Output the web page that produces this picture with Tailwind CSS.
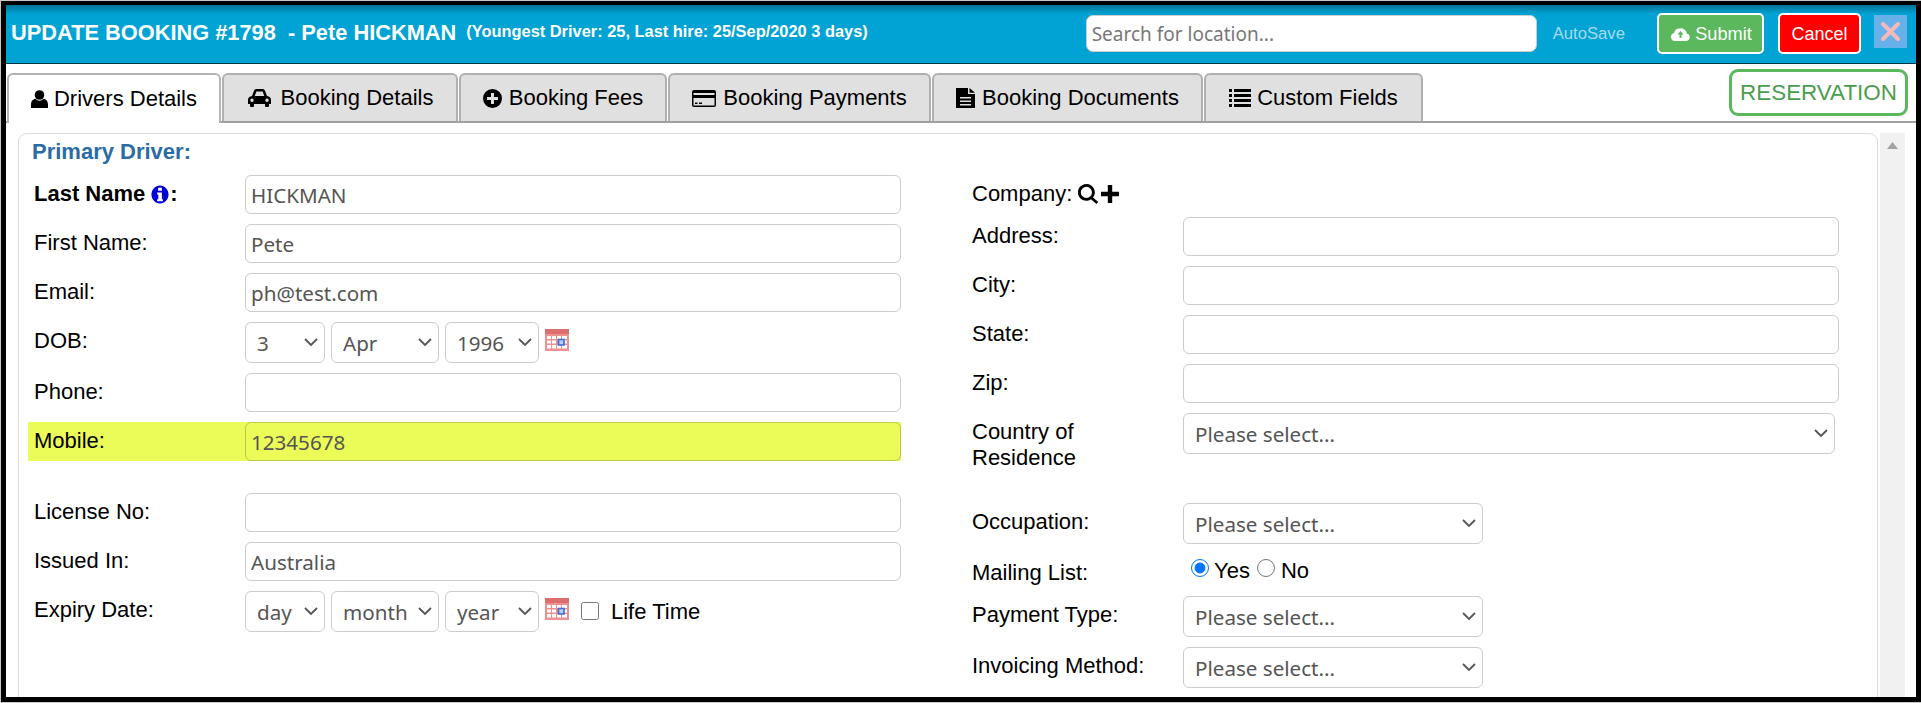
<!DOCTYPE html>
<html lang="en">
<head>
    <meta charset="UTF-8">
    <title>Update Booking</title>
    <script src="https://cdn.jsdelivr.net/npm/@tailwindcss/browser@4"></script>
</head>
<body class="bg-[#c8c8c8]">
    <div class="w-[1921px] h-[703px] overflow-hidden pt-px pl-px font-['Liberation_Sans',Arial,sans-serif] text-[22px] leading-[26px] text-black">
        <div class="w-[1920px] h-[701px] border-t-4 border-l-[5px] border-r-[5px] border-b-[5px] border-black bg-white flex flex-col">

            <!-- header bar -->
            <div class="h-[59px] shrink-0 flex border-b border-[#06384a] bg-[linear-gradient(#00749a,#00a3d3_9px)] text-white">
                <div class="ml-[5px] mt-[15px] text-[21.8px] font-bold whitespace-pre">UPDATE BOOKING #1798  - Pete HICKMAN</div>
                <div class="ml-[10px] mt-[13px] text-[16.4px] font-bold">(Youngest Driver: 25, Last hire: 25/Sep/2020 3 days)</div>
                <input type="text" placeholder="Search for location..." class="ml-auto mt-[10px] w-[451px] h-[37px] rounded-[7px] border border-[#ccc] bg-white px-[5px] font-['Noto_Sans',sans-serif] text-[19px] text-[#555] placeholder:text-[#777]">
                <div class="ml-[16px] mt-[16px] text-[16.7px] leading-[26px] text-[#a4dcf0]">AutoSave</div>
                <button class="ml-[32px] mt-[8px] w-[107px] h-[41px] pl-[2px] rounded-[5px] border-2 border-white bg-[#5cb85c] flex items-center justify-center gap-[5px] text-[18.2px]">
                    <svg width="19" height="14" viewBox="0 0 19 14"><path fill="#fff" d="M4 14a4 4 0 0 1-.8-7.900A5.200 5.200 0 0 1 8.500 1.500a5 5 0 0 1 4.700 1A4.500 4.500 0 0 1 15.700 6.500a3.800 3.800 0 0 1-.7 7.500z"/><path fill="#5cb85c" d="M9.500 4l3 3.500h-2V11h-2V7.500h-2z"/></svg>
                    Submit
                </button>
                <button class="ml-[14px] mt-[8px] w-[83px] h-[41px] rounded-[5px] border-2 border-white bg-[#ff0000] text-[18px]">Cancel</button>
                <div class="ml-[13px] mr-[9px] mt-[10px] w-[33px] h-[33px] bg-[#67b1eb] flex items-center justify-center">
                    <svg width="21" height="21" viewBox="0 0 21 21"><path d="M3 3l15 15M18 3L3 18" stroke="#f3b9bb" stroke-width="4" stroke-linecap="round"/></svg>
                </div>
            </div>

            <!-- tabs -->
            <div class="h-[59px] shrink-0 flex items-end gap-px pl-px border-b-2 border-[#a0a0a0]">
                <a class="relative -mb-[2px] w-[214px] h-[50px] flex items-center justify-center gap-[6px] rounded-t-[6px] border-2 border-b-0 border-[#b4b4b4] bg-white">
                    <svg width="17" height="18" viewBox="0 0 17 18"><circle cx="8.500" cy="5" r="4.800"/><path d="M0 18v-3.500C0 11 2.500 8.800 4.500 8.800c1 1.200 2.500 1.900 4 1.900s3-.7 4-1.900c2 0 4.500 2.200 4.500 5.700V18z"/></svg>
                    Drivers Details
                </a>
                <a class="w-[236px] h-[48px] flex items-center justify-center gap-[9px] rounded-t-[6px] border-2 border-b-0 border-[#b0b0b0] bg-[#e0e0e0]">
                    <svg width="25" height="18" viewBox="0 0 25 18"><path fill-rule="evenodd" d="M5 7l2-5.300Q7.600 0 9.200 0h6.600q1.600 0 2.200 1.700L20 7q4 .6 4 4v4h-2v2q0 1-1 1h-2q-1 0-1-1v-2H7v2q0 1-1 1H4q-1 0-1-1v-2H1v-4q0-3.400 4-4zm2.700 0h9.600L15.600 2.500H9.400zM5 9.500a1.700 1.700 0 1 0 0 3.400 1.700 1.700 0 0 0 0-3.400zm15 0a1.700 1.700 0 1 0 0 3.400 1.700 1.700 0 0 0 0-3.400z"/></svg>
                    Booking Details
                </a>
                <a class="w-[208px] h-[48px] flex items-center justify-center gap-[7px] rounded-t-[6px] border-2 border-b-0 border-[#b0b0b0] bg-[#e0e0e0]">
                    <svg width="19" height="19" viewBox="0 0 19 19"><path fill-rule="evenodd" d="M9.500 0a9.500 9.500 0 1 1 0 19 9.500 9.500 0 0 1 0-19zM8 4v4H4v3h4v4h3v-4h4V8h-4V4z"/></svg>
                    Booking Fees
                </a>
                <a class="w-[263px] h-[48px] flex items-center justify-center gap-[7px] rounded-t-[6px] border-2 border-b-0 border-[#b0b0b0] bg-[#e0e0e0]">
                    <svg width="24" height="17" viewBox="0 0 24 17"><path fill-rule="evenodd" d="M2 0h20q2 0 2 2v13q0 2-2 2H2q-2 0-2-2V2q0-2 2-2zm-.500 3v2h21V3zm0 5v7.500h21V8zM3 12.500h2.500V14H3zm4 0h3V14H7z"/></svg>
                    Booking Payments
                </a>
                <a class="w-[271px] h-[48px] flex items-center justify-center gap-[7px] rounded-t-[6px] border-2 border-b-0 border-[#b0b0b0] bg-[#e0e0e0]">
                    <svg width="19" height="20" viewBox="0 0 19 20"><path fill-rule="evenodd" d="M0 0h12v6h7v14H0zM4 9v1.500h11V9zm0 3.500V14h11v-1.500zM4 16v1.500h11V16z"/><path d="M13.500 0L19 4.800h-5.500z"/></svg>
                    Booking Documents
                </a>
                <a class="w-[219px] h-[48px] flex items-center justify-center gap-[6px] rounded-t-[6px] border-2 border-b-0 border-[#b0b0b0] bg-[#e0e0e0]">
                    <svg width="22" height="18" viewBox="0 0 22 18"><path d="M0 0h3v3H0zM5 0h17v3H5zM0 5h3v3H0zM5 5h17v3H5zM0 10h3v3H0zM5 10h17v3H5zM0 15h3v3H0zM5 15h17v3H5z"/></svg>
                    Custom Fields
                </a>
                <div class="ml-auto mr-[8px] mb-[5px] w-[179px] h-[47px] rounded-[9px] border-[3px] border-[#5cb85c] flex items-center justify-center text-[22.4px] text-[#4a9d4f]">RESERVATION</div>
            </div>

            <!-- form panel + scrollbar -->
            <div class="flex-1 flex pl-[12px] pt-[10px] gap-[2px] min-h-0">
                <div class="flex-1 min-w-0 rounded-t-[9px] border border-b-0 border-[#ddd] pt-[5px]">
                    <div class="ml-[13px] font-bold text-[#2a6ca5]">Primary Driver:</div>
                    <div class="flex mt-[10px] ml-[9px]">

                        <!-- left column -->
                        <div class="w-[873px] shrink-0">
                            <div class="flex pl-[6px] h-[39px]">
                                <label class="w-[211px] pt-[6px] font-bold flex items-start"><span class="flex items-center">Last Name <svg class="ml-[6px] mr-px mt-[1px]" width="18" height="19" viewBox="0 0 18 20"><path fill="#0000d8" fill-rule="evenodd" d="M9 .500c5 0 9 4.300 9 9.500s-4 9.500-9 9.500S0 15.200 0 10 4 .500 9 .500zM7 3v3h4V3zM6 8v2h1.200v5H6v2h6v-2h-1V8z"/></svg>:</span></label>
                                <input type="text" value="HICKMAN" class="w-[656px] h-[39px] rounded-[6px] border border-[#ccc] bg-white px-[5px] font-['Noto_Sans',sans-serif] text-[20.6px] text-[#555]">
                            </div>
                            <div class="flex pl-[6px] h-[39px] mt-[10px]">
                                <label class="w-[211px] pt-[6px]">First Name:</label>
                                <input type="text" value="Pete" class="w-[656px] h-[39px] rounded-[6px] border border-[#ccc] bg-white px-[5px] font-['Noto_Sans',sans-serif] text-[20.6px] text-[#555]">
                            </div>
                            <div class="flex pl-[6px] h-[39px] mt-[10px]">
                                <label class="w-[211px] pt-[6px]">Email:</label>
                                <input type="text" value="ph@test.com" class="w-[656px] h-[39px] rounded-[6px] border border-[#ccc] bg-white px-[5px] font-['Noto_Sans',sans-serif] text-[20.6px] text-[#555]">
                            </div>
                            <div class="flex pl-[6px] h-[41px] mt-[10px]">
                                <label class="w-[211px] pt-[6px]">DOB:</label>
                                <div class="relative w-[80px] h-[41px]">
                                    <select class="appearance-none w-full h-full rounded-[6px] border border-[#ccc] bg-white pl-[11px] font-['Noto_Sans',sans-serif] text-[20.6px] text-[#555]"><option>3</option></select>
                                    <svg class="absolute right-[7px] top-[16px] pointer-events-none" width="14" height="9" viewBox="0 0 14 9"><path d="M1 1l6 6 6-6" fill="none" stroke="#555" stroke-width="1.800"/></svg>
                                </div>
                                <div class="relative ml-[6px] w-[108px] h-[41px]">
                                    <select class="appearance-none w-full h-full rounded-[6px] border border-[#ccc] bg-white pl-[11px] font-['Noto_Sans',sans-serif] text-[20.6px] text-[#555]"><option>Apr</option></select>
                                    <svg class="absolute right-[7px] top-[16px] pointer-events-none" width="14" height="9" viewBox="0 0 14 9"><path d="M1 1l6 6 6-6" fill="none" stroke="#555" stroke-width="1.800"/></svg>
                                </div>
                                <div class="relative ml-[6px] w-[94px] h-[41px]">
                                    <select class="appearance-none w-full h-full rounded-[6px] border border-[#ccc] bg-white pl-[11px] font-['Noto_Sans',sans-serif] text-[20.6px] text-[#555]"><option>1996</option></select>
                                    <svg class="absolute right-[7px] top-[16px] pointer-events-none" width="14" height="9" viewBox="0 0 14 9"><path d="M1 1l6 6 6-6" fill="none" stroke="#555" stroke-width="1.800"/></svg>
                                </div>
                                <svg class="ml-[6px] mt-[7px]" width="24" height="22" viewBox="0 0 24 22"><rect width="24" height="22" fill="#ee9090"/><rect width="24" height="5" fill="#dc6e6e"/><path d="M2 7h4v3H2zM7 7h4v3H7zM12 7h4v3h-4zM17 7h5v3h-5zM2 11.500h4v3H2zM7 11.500h4v3H7zM2 16h4v3.500H2zM7 16h4v3.500H7zM12 16h4v3.500h-4zM17 16h5v3.500h-5zM19.500 11.500H22v3h-2.500z" fill="#fff"/><rect x="13.500" y="10.500" width="5.500" height="5.500" fill="#b8ccf5" stroke="#3c6fdc" stroke-width="1.600"/></svg>
                            </div>
                            <div class="flex pl-[6px] h-[39px] mt-[10px]">
                                <label class="w-[211px] pt-[6px]">Phone:</label>
                                <input type="text" class="w-[656px] h-[39px] rounded-[6px] border border-[#ccc] bg-white px-[5px] font-['Noto_Sans',sans-serif] text-[20.6px] text-[#555]">
                            </div>
                            <div class="flex pl-[6px] h-[39px] mt-[10px] bg-[#ebfb57]">
                                <label class="w-[211px] pt-[6px]">Mobile:</label>
                                <input type="text" value="12345678" class="w-[656px] h-[39px] rounded-[6px] border border-[#bcc94a] bg-[#ebfb57] px-[5px] font-['Noto_Sans',sans-serif] text-[20.6px] text-[#555]">
                            </div>
                            <div class="flex pl-[6px] h-[39px] mt-[32px]">
                                <label class="w-[211px] pt-[6px]">License No:</label>
                                <input type="text" class="w-[656px] h-[39px] rounded-[6px] border border-[#ccc] bg-white px-[5px] font-['Noto_Sans',sans-serif] text-[20.6px] text-[#555]">
                            </div>
                            <div class="flex pl-[6px] h-[39px] mt-[10px]">
                                <label class="w-[211px] pt-[6px]">Issued In:</label>
                                <input type="text" value="Australia" class="w-[656px] h-[39px] rounded-[6px] border border-[#ccc] bg-white px-[5px] font-['Noto_Sans',sans-serif] text-[20.6px] text-[#555]">
                            </div>
                            <div class="flex pl-[6px] h-[41px] mt-[10px]">
                                <label class="w-[211px] pt-[6px]">Expiry Date:</label>
                                <div class="relative w-[80px] h-[41px]">
                                    <select class="appearance-none w-full h-full rounded-[6px] border border-[#ccc] bg-white pl-[11px] font-['Noto_Sans',sans-serif] text-[20.6px] text-[#555]"><option>day</option></select>
                                    <svg class="absolute right-[7px] top-[16px] pointer-events-none" width="14" height="9" viewBox="0 0 14 9"><path d="M1 1l6 6 6-6" fill="none" stroke="#555" stroke-width="1.800"/></svg>
                                </div>
                                <div class="relative ml-[6px] w-[108px] h-[41px]">
                                    <select class="appearance-none w-full h-full rounded-[6px] border border-[#ccc] bg-white pl-[11px] font-['Noto_Sans',sans-serif] text-[20.6px] text-[#555]"><option>month</option></select>
                                    <svg class="absolute right-[7px] top-[16px] pointer-events-none" width="14" height="9" viewBox="0 0 14 9"><path d="M1 1l6 6 6-6" fill="none" stroke="#555" stroke-width="1.800"/></svg>
                                </div>
                                <div class="relative ml-[6px] w-[94px] h-[41px]">
                                    <select class="appearance-none w-full h-full rounded-[6px] border border-[#ccc] bg-white pl-[11px] font-['Noto_Sans',sans-serif] text-[20.6px] text-[#555]"><option>year</option></select>
                                    <svg class="absolute right-[7px] top-[16px] pointer-events-none" width="14" height="9" viewBox="0 0 14 9"><path d="M1 1l6 6 6-6" fill="none" stroke="#555" stroke-width="1.800"/></svg>
                                </div>
                                <svg class="ml-[6px] mt-[7px]" width="24" height="22" viewBox="0 0 24 22"><rect width="24" height="22" fill="#ee9090"/><rect width="24" height="5" fill="#dc6e6e"/><path d="M2 7h4v3H2zM7 7h4v3H7zM12 7h4v3h-4zM17 7h5v3h-5zM2 11.500h4v3H2zM7 11.500h4v3H7zM2 16h4v3.500H2zM7 16h4v3.500H7zM12 16h4v3.500h-4zM17 16h5v3.500h-5zM19.500 11.500H22v3h-2.500z" fill="#fff"/><rect x="13.500" y="10.500" width="5.500" height="5.500" fill="#b8ccf5" stroke="#3c6fdc" stroke-width="1.600"/></svg>
                                <input type="checkbox" class="ml-[12px] mt-[11px] w-[18px] h-[18px]">
                                <span class="ml-[12px] pt-[8px]">Life Time</span>
                            </div>
                        </div>

                        <!-- right column -->
                        <div class="ml-[71px] w-[868px] shrink-0 pt-[6px]">
                            <div class="flex items-center h-[26px]">
                                Company:
                                <svg class="ml-[6px]" width="21" height="20" viewBox="0 0 20 19"><path fill-rule="evenodd" d="M8 0a8 8 0 0 1 6.300 12.900l5 4.300-1.700 1.800-5.200-4.400A8 8 0 1 1 8 0zm0 2.700a5.300 5.300 0 1 0 0 10.600A5.300 5.300 0 0 0 8 2.700z"/></svg>
                                <svg class="ml-[2px]" width="18" height="18" viewBox="0 0 18 18"><path d="M6.800 0h4.400v6.800H18v4.400h-6.800V18H6.800v-6.800H0V6.800h6.800z"/></svg>
                            </div>
                            <div class="flex h-[39px] mt-[10px]">
                                <label class="w-[211px] pt-[6px]">Address:</label>
                                <input type="text" class="w-[656px] h-[39px] rounded-[6px] border border-[#ccc] bg-white px-[5px]">
                            </div>
                            <div class="flex h-[39px] mt-[10px]">
                                <label class="w-[211px] pt-[6px]">City:</label>
                                <input type="text" class="w-[656px] h-[39px] rounded-[6px] border border-[#ccc] bg-white px-[5px]">
                            </div>
                            <div class="flex h-[39px] mt-[10px]">
                                <label class="w-[211px] pt-[6px]">State:</label>
                                <input type="text" class="w-[656px] h-[39px] rounded-[6px] border border-[#ccc] bg-white px-[5px]">
                            </div>
                            <div class="flex h-[39px] mt-[10px]">
                                <label class="w-[211px] pt-[6px]">Zip:</label>
                                <input type="text" class="w-[656px] h-[39px] rounded-[6px] border border-[#ccc] bg-white px-[5px]">
                            </div>
                            <div class="flex h-[41px] mt-[10px]">
                                <label class="w-[211px] pt-[6px]">Country of<br>Residence</label>
                                <div class="relative w-[652px] h-[41px]">
                                    <select class="appearance-none w-full h-full rounded-[6px] border border-[#ccc] bg-white pl-[11px] font-['Noto_Sans',sans-serif] text-[20.6px] text-[#555]"><option>Please select...</option></select>
                                    <svg class="absolute right-[7px] top-[16px] pointer-events-none" width="14" height="9" viewBox="0 0 14 9"><path d="M1 1l6 6 6-6" fill="none" stroke="#555" stroke-width="1.800"/></svg>
                                </div>
                            </div>
                            <div class="flex h-[41px] mt-[49px]">
                                <label class="w-[211px] pt-[6px]">Occupation:</label>
                                <div class="relative w-[300px] h-[41px]">
                                    <select class="appearance-none w-full h-full rounded-[6px] border border-[#ccc] bg-white pl-[11px] font-['Noto_Sans',sans-serif] text-[20.6px] text-[#555]"><option>Please select...</option></select>
                                    <svg class="absolute right-[7px] top-[16px] pointer-events-none" width="14" height="9" viewBox="0 0 14 9"><path d="M1 1l6 6 6-6" fill="none" stroke="#555" stroke-width="1.800"/></svg>
                                </div>
                            </div>
                            <div class="flex h-[42px] mt-[10px]">
                                <label class="w-[211px] pt-[6px]">Mailing List:</label>
                                <div class="flex items-start">
                                    <input type="radio" name="mailing" checked class="ml-[8px] mt-[5px] w-[18px] h-[18px]">
                                    <span class="ml-[5px] mt-[4px]">Yes</span>
                                    <input type="radio" name="mailing" class="ml-[7px] mt-[5px] w-[18px] h-[18px]">
                                    <span class="ml-[6px] mt-[4px]">No</span>
                                </div>
                            </div>
                            <div class="flex h-[41px]">
                                <label class="w-[211px] pt-[6px]">Payment Type:</label>
                                <div class="relative w-[300px] h-[41px]">
                                    <select class="appearance-none w-full h-full rounded-[6px] border border-[#ccc] bg-white pl-[11px] font-['Noto_Sans',sans-serif] text-[20.6px] text-[#555]"><option>Please select...</option></select>
                                    <svg class="absolute right-[7px] top-[16px] pointer-events-none" width="14" height="9" viewBox="0 0 14 9"><path d="M1 1l6 6 6-6" fill="none" stroke="#555" stroke-width="1.800"/></svg>
                                </div>
                            </div>
                            <div class="flex h-[41px] mt-[10px]">
                                <label class="w-[211px] pt-[6px]">Invoicing Method:</label>
                                <div class="relative w-[300px] h-[41px]">
                                    <select class="appearance-none w-full h-full rounded-[6px] border border-[#ccc] bg-white pl-[11px] font-['Noto_Sans',sans-serif] text-[20.6px] text-[#555]"><option>Please select...</option></select>
                                    <svg class="absolute right-[7px] top-[16px] pointer-events-none" width="14" height="9" viewBox="0 0 14 9"><path d="M1 1l6 6 6-6" fill="none" stroke="#555" stroke-width="1.800"/></svg>
                                </div>
                            </div>
                        </div>
                    </div>
                </div>
                <div class="w-[25px] mr-[11px] bg-[#f1f1f1] flex justify-center pt-[9px]">
                    <svg width="11" height="7" viewBox="0 0 11 7"><path fill="#a3a3a3" d="M5.500 0L11 7H0z"/></svg>
                </div>
            </div>
        </div>
    </div>
</body>
</html>
